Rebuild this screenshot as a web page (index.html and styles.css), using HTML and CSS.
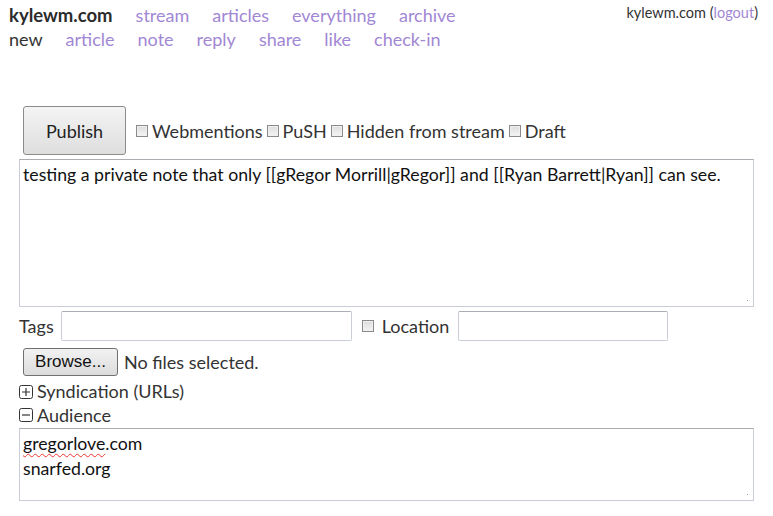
FILE: index.html
```html
<!DOCTYPE html>
<html>
<head>
<meta charset="utf-8">
<link rel="stylesheet" href="styles.css">
</head>
<body>
<div class="account">kylewm.com (<a href="#">logout</a>)</div>
<nav class="nav">
  <div class="nav-row">
    <span class="site">kylewm.com</span>
    <a href="#">stream</a>
    <a href="#">articles</a>
    <a href="#">everything</a>
    <a href="#">archive</a>
  </div>
  <div class="nav-row">
    <span class="current">new</span>
    <a href="#">article</a>
    <a href="#">note</a>
    <a href="#">reply</a>
    <a href="#">share</a>
    <a href="#">like</a>
    <a href="#">check-in</a>
  </div>
</nav>
<form class="editor">
  <div class="actions">
    <button type="button" class="publish">Publish</button>
    <label class="opt"><span class="cb"></span>Webmentions</label>
    <label class="opt"><span class="cb"></span>PuSH</label>
    <label class="opt"><span class="cb"></span>Hidden from stream</label>
    <label class="opt"><span class="cb"></span>Draft</label>
  </div>
  <div class="area main-area">testing a private note that only [[gRegor Morrill|gRegor]] and [[Ryan Barrett|Ryan]] can see.<span class="grip"></span></div>
  <div class="fields">
    <span class="lbl">Tags</span>
    <span class="input tags"></span>
    <label class="opt loc"><span class="cb"></span>Location</label>
    <span class="input location"></span>
  </div>
  <div class="file-row">
    <button type="button" class="browse">Browse...</button>
    <span>No files selected.</span>
  </div>
  <div class="toggle first"><svg class="box" width="14" height="14" viewBox="0 0 14 14"><rect x="0.5" y="0.5" width="13" height="13" rx="2" fill="none" stroke="#333"/><path d="M3 7h8M7 3v8" stroke="#333" stroke-width="1.2"/></svg>Syndication (URLs)</div>
  <div class="toggle"><svg class="box" width="14" height="14" viewBox="0 0 14 14"><rect x="0.5" y="0.5" width="13" height="13" rx="2" fill="none" stroke="#333"/><path d="M3 7h8" stroke="#333" stroke-width="1.2"/></svg>Audience</div>
  <div class="area audience"><span class="squig">gregorlove</span>.com<br>snarfed.org<span class="grip"></span></div>
</form>
</body>
</html>
```
FILE: styles.css
```css
* { box-sizing: border-box; }
body {
  margin: 0;
  padding: 4px 9px;
  font-family: Lato, "Open Sans", sans-serif;
  font-size: 18px;
  color: #333;
  background: #fff;
  position: relative;
}
a { color: #a187d4; text-decoration: none; }
.account {
  position: absolute;
  right: 15px;
  top: 3px;
  font-size: 14.5px;
  line-height: 20px;
}
.nav-row {
  display: flex;
  gap: 23px;
  line-height: 24px;
}
.nav-row:first-child { margin-top: -1px; }
.site { font-weight: bold; color: #2b2b2b; font-size: 18.5px; }
.current { color: #333; }
.editor {
  padding: 55px 10px 0 10px;
}
.actions {
  display: flex;
  align-items: center;
  margin-left: 4px;
  height: 49px;
}
.publish {
  width: 103px;
  height: 49px;
  font: inherit;
  color: #222;
  border: 1px solid #8c8c8c;
  border-radius: 3px;
  background: linear-gradient(#f4f4f4, #dedede);
  margin-right: 10px;
}
.opt { display: inline-flex; align-items: center; margin-right: 4px; }
.cb {
  width: 12px; height: 12px;
  border: 1px solid #8a8a8a;
  background: linear-gradient(#dcdcdc, #f5f5f5);
  box-shadow: inset 0 0 0 1px #f0f0f0;
  margin-right: 4px;
}
.area {
  position: relative;
  border: 1px solid #c9ced6;
  border-top-color: #abadb3;
  background: #fff;
  padding: 2px 3px;
  font-size: 17.7px;
  line-height: 25px;
  color: #111;
}
.main-area { margin-top: 4px; height: 148px; }
.grip {
  position: absolute;
  right: 3px; bottom: 3px;
  width: 7px; height: 7px;
  background:
    radial-gradient(circle, #999 0.8px, transparent 1px) 0 0 / 3px 3px;
  clip-path: polygon(100% 0, 100% 100%, 0 100%);
}
.fields {
  display: flex;
  align-items: center;
  margin-top: 3px;
  height: 31px;
}
.lbl { margin-right: 7px; }
.input {
  display: inline-block;
  height: 30px;
  border: 1px solid #c9ced6;
  border-top-color: #abadb3;
  border-radius: 2px;
}
.tags { width: 291px; margin-right: 10px; }
.loc .cb { margin-right: 8px; }
.loc { margin-right: 9px; }
.location { width: 210px; }
.file-row {
  display: flex;
  align-items: center;
  gap: 6px;
  margin-top: 7px;
  margin-left: 4px;
}
.browse {
  height: 28px;
  width: 95px;
  font-family: Arial, "Liberation Sans", sans-serif;
  font-size: 17px;
  color: #111;
  border: 1px solid #707070;
  border-radius: 3px;
  background: linear-gradient(#f2f2f2, #dcdcdc);
  padding: 0;
}
.toggle {
  display: flex;
  align-items: center;
  line-height: 23px;
}
.toggle.first { margin-top: 4px; }
.toggle + .toggle { line-height: 24px; }
.box {
  margin-right: 4px;
  flex: none;
}
.audience { height: 73px; margin-top: 1px; }
.squig {
  text-decoration: underline wavy #e33;
  text-decoration-thickness: 1px;
  text-underline-offset: 3px;
}
```
